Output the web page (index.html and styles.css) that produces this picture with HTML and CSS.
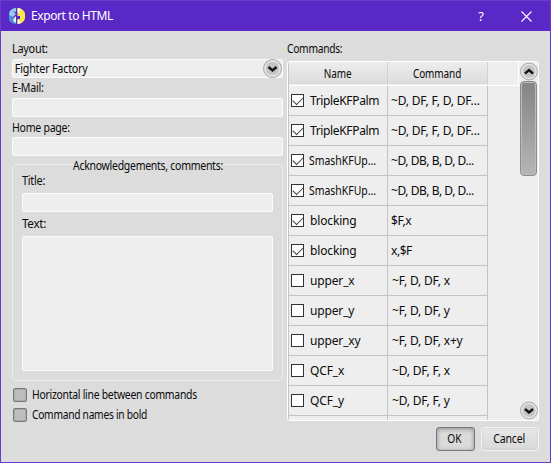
FILE: index.html
```html
<!DOCTYPE html>
<html lang="en">
<head>
<meta charset="utf-8">
<title>Export to HTML</title>
<link rel="stylesheet" href="styles.css">
</head>
<body>
<div class="window">
  <header class="titlebar">
    <svg class="logo" width="16" height="16" viewBox="0 0 16 16">
      <path d="M7 0A8 8 0 0 0 7 16V11L4 14 5 9 2 10 6 6 4 3 7 4z" fill="#4b8edb"/>
      <path d="M7 0A8 8 0 0 0 0 7L4 9 7 6 4 3 7 4z" fill="#9bc9ed"/>
      <path d="M5 10L7 8V15L4 13z" fill="#e7f2fa"/>
      <path d="M8.5 0A8 8 0 0 1 8.5 16V11H11V8H8.5V6L11 3 8.5 4z" fill="#f5e64b"/>
      <path d="M8.5 0L12 1 10 5 8.5 6zM8.5 12H10L12 15 8.5 16z" fill="#fffbd0"/>
    </svg>
    <h1 class="title">Export to HTML</h1>
    <span class="help">?</span>
    <svg class="close" width="11" height="11" viewBox="0 0 11 11"><path d="M.5.5l10 10M10.5.5l-10 10" stroke="#fff" stroke-width="1.1"/></svg>
  </header>
  <main class="content">
    <section class="form">
      <label class="label layout">Layout:</label>
      <div class="field combo"><span class="combo-text">Fighter Factory</span>
        <svg class="round" width="19" height="19" viewBox="0 0 19 19"><circle cx="9.5" cy="9.5" r="9" fill="#d7d7d7" stroke="#aaa"/><circle cx="9.5" cy="9.5" r="7.3" fill="#c4c4c4" stroke="#eee"/><path d="M5.5 8l4 3.5 4-3.5" fill="none" stroke="#111" stroke-width="2.4"/></svg>
      </div>
      <label class="label email">E-Mail:</label>
      <div class="field"></div>
      <label class="label home">Home page:</label>
      <div class="field"></div>
      <fieldset class="group">
        <legend class="legend"><span class="legend-text">Acknowledgements, comments:</span></legend>
        <label class="label group-title">Title:</label>
        <div class="field"></div>
        <label class="label text-label">Text:</label>
        <div class="field area"></div>
      </fieldset>
      <div class="option first"><i class="box"></i><span class="line-text">Horizontal line between commands</span></div>
      <div class="option"><i class="box"></i><span class="bold-text">Command names in bold</span></div>
    </section>
    <section class="commands">
      <label class="label commands-label">Commands:</label>
      <div class="list">
        <div class="table">
          <div class="head"><span class="th"><span class="th-text">Name</span></span><span class="th command-th"><span class="th-text">Command</span></span></div>
          <div class="row"><span class="name"><i class="check on"></i><b class="triple">TripleKFPalm</b></span><span class="cmd c1">~D, DF, F, D, DF...</span></div>
          <div class="row"><span class="name"><i class="check on"></i><b class="triple">TripleKFPalm</b></span><span class="cmd c1">~D, DF, F, D, DF...</span></div>
          <div class="row"><span class="name"><i class="check on"></i><b class="smash">SmashKFUp...</b></span><span class="cmd c2">~D, DB, B, D, D...</span></div>
          <div class="row"><span class="name"><i class="check on"></i><b class="smash">SmashKFUp...</b></span><span class="cmd c2">~D, DB, B, D, D...</span></div>
          <div class="row"><span class="name"><i class="check on"></i><b>blocking</b></span><span class="cmd c2">$F,x</span></div>
          <div class="row"><span class="name"><i class="check on"></i><b>blocking</b></span><span class="cmd c2">x,$F</span></div>
          <div class="row"><span class="name"><i class="check"></i><b>upper_x</b></span><span class="cmd">~F, D, DF, x</span></div>
          <div class="row"><span class="name"><i class="check"></i><b>upper_y</b></span><span class="cmd">~F, D, DF, y</span></div>
          <div class="row"><span class="name"><i class="check"></i><b>upper_xy</b></span><span class="cmd">~F, D, DF, x+y</span></div>
          <div class="row"><span class="name"><i class="check"></i><b>QCF_x</b></span><span class="cmd">~D, DF, F, x</span></div>
          <div class="row"><span class="name"><i class="check"></i><b>QCF_y</b></span><span class="cmd">~D, DF, F, y</span></div>
          <div class="row"><span class="name"></span><span class="cmd"></span></div>
        </div>
        <div class="scroll">
          <svg width="18" height="19" viewBox="0 0 18 19"><circle cx="9" cy="9.5" r="8.5" fill="#d7d7d7" stroke="#aaa"/><circle cx="9" cy="9.5" r="7" fill="#c4c4c4" stroke="#eee"/><path d="M5 11.5L9 8l4 3.5" fill="none" stroke="#111" stroke-width="2.4"/></svg>
          <div class="thumb"></div>
          <svg class="down" width="18" height="19" viewBox="0 0 18 19"><circle cx="9" cy="9.5" r="8.5" fill="#d7d7d7" stroke="#aaa"/><circle cx="9" cy="9.5" r="7" fill="#c4c4c4" stroke="#eee"/><path d="M5 8l4 3.5L13 8" fill="none" stroke="#111" stroke-width="2.4"/></svg>
        </div>
      </div>
      <div class="actions"><button class="button ok"><span class="ok-text">OK</span></button><button class="button cancel"><span class="cancel-text">Cancel</span></button></div>
    </section>
  </main>
</div>
</body>
</html>
```
FILE: styles.css
```css
* { box-sizing: border-box; }
body { margin: 0; font: 12px/16px "Noto Sans", "Open Sans", sans-serif; color: #0b0b0b; }
.window { width: 551px; height: 463px; border: 1px solid #6b3acb; background: #dcdcdc; overflow: hidden; }
.titlebar { height: 30px; background: #5b28c8; color: #fff; display: flex; align-items: center; padding: 0 18px 0 8px; }
.title { margin: 0 0 0 6px; font-size: 12px; font-weight: 400; flex: 1; letter-spacing: -.4px; line-height: 16px; }
.help { margin-right: 37px; font-size: 13px; }
.close { display: block; }
.content { display: flex; height: 431px; padding: 10px 11px 0; }
.form { width: 271px; margin-right: 4px; }
.label { display: block; height: 16px; white-space: nowrap; letter-spacing: -.3px; transform: scaleX(.91); transform-origin: left; }
.field { height: 19px; border: 1px solid #fbfbfb; border-radius: 2px; background: #eee; }
.combo { display: flex; margin-top: 2px; justify-content: space-between; }
.combo-text { padding-left: 2px; letter-spacing: -.25px; line-height: 18px; transform: scaleX(.9); transform-origin: left; }
.round { display: block; margin-top: -1px; }
.email { margin: 2px 0; transform: scaleX(.89); }
.home { margin: 3px 0 1px; transform: scaleX(.88); }
.group { height: 224px; margin: 1px 0 0; padding: 0 9px; border: 1px solid #ececec; border-radius: 4px; min-width: 0; }
.legend { width: 150px; height: 14px; margin: 0 auto; padding: 0; line-height: 17px; white-space: nowrap; }
.legend-text { display: inline-block; letter-spacing: -.3px; transform: scaleX(.873); transform-origin: left; }
.group-title { margin: 2px 0 4px; }
.text-label { margin: 4px 0; transform: scaleX(.97); }
.area { height: 135px; }
.option { display: flex; align-items: center; height: 15px; margin: 5px 0 0 1px; white-space: nowrap; letter-spacing: -.3px; }
.option.first { margin-top: 6px; }
.line-text { transform: scaleX(.866); transform-origin: left; }
.bold-text { transform: scaleX(.85); transform-origin: left; }
.box { width: 14px; height: 14px; margin-right: 5px; border: 1px solid #777; border-radius: 2px; background: #bdbdbd; box-shadow: inset 0 0 1px 1px #aaa; }
.commands { width: 252px; }
.commands-label { transform: scaleX(.85); }
.list { display: flex; justify-content: space-between; height: 360px; margin-top: 4px; border: 1px solid #fff; border-radius: 3px; background: #eee; overflow: hidden; }
.table { width: 231px; border-left: 1px solid #c5c5c5; }
.head { display: flex; height: 24px; background: linear-gradient(#ececec, #dcdcdc) no-repeat 0 1px / 199px 21px; border-bottom: 1px solid #fff; box-shadow: inset -1px 0 #fff; }
.th { width: 99px; text-align: center; border-right: 1px solid #d1d1d1; line-height: 23px; letter-spacing: -.1px; }
.th-text { display: inline-block; transform: scaleX(.83); }
.command-th { width: 100px; }
.row { display: flex; width: 199px; height: 30px; }
.name, .cmd { width: 100px; border-right: 1px solid #c3c3c3; border-bottom: 1px solid #c3c3c3; display: flex; align-items: center; white-space: nowrap; }
.name { width: 99px; padding-left: 2px; }
.name b { font-weight: 400; margin-left: 6px; letter-spacing: -.15px; }
.name .triple { letter-spacing: -.35px; }
.name .smash { margin-left: 5px; letter-spacing: 0; transform: scaleX(.87); transform-origin: left; }
.cmd { padding-left: 4px; letter-spacing: -.2px; }
.c1 { padding-left: 3px; }
.c2 { padding-left: 3px; letter-spacing: -.45px; }
.check { width: 13px; height: 13px; border: 1px solid #333; background: #fff; display: flex; align-items: center; justify-content: center; flex: none; }
.check.on::before { content: ""; width: 9px; height: 5px; border-left: 1.5px solid #444; border-bottom: 1.5px solid #444; transform: translateY(-1.5px) rotate(-45deg); flex: none; }
.scroll { width: 18px; display: flex; flex-direction: column; }
.scroll svg { display: block; flex: none; }
.thumb { width: 17px; height: 95px; border: 1px solid #8b8b8b; border-radius: 4px; background: linear-gradient(#858585, #b5b5b5); box-shadow: inset 0 0 0 1px #bcbcbc; }
.down { margin-top: auto; }
.actions { display: flex; justify-content: flex-end; gap: 6px; margin-top: 6px; }
.button { height: 24px; border: 1px solid #f2f2f2; border-radius: 3px; padding: 0; font: inherit; color: inherit; background: linear-gradient(#e7e7e7, #d9d9d9); }
.ok { width: 39px; border-color: #777; box-shadow: inset 0 1px 4px #888; background: #dadada; }
.ok-text { display: inline-block; transform: translateX(-1px) scaleX(.85); }
.cancel { width: 58px; box-shadow: inset 0 0 2px #c5c5c5; letter-spacing: -.2px; }
.cancel-text { display: inline-block; transform: translateX(-1px) scaleX(.88); }
```
